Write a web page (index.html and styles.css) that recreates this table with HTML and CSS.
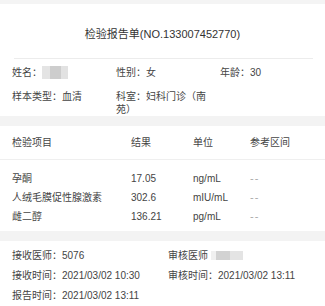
FILE: index.html
```html
<!DOCTYPE html>
<html lang="zh">
<head>
<meta charset="utf-8">
<link rel="stylesheet" href="styles.css">
</head>
<body>
<div class="topbar"></div>
<h1 class="title">检验报告单(NO.133007452770)</h1>
<div class="rule"></div>
<div class="info">
  <div>姓名：<span class="blur blur-name"></span></div>
  <div>性别：女</div>
  <div>年龄：30</div>
  <div>样本类型：血清</div>
  <div>科室：妇科门诊（南苑）</div>
  <div></div>
</div>
<div class="band"></div>
<div class="table">
  <div class="thead">
    <span>检验项目</span><span>结果</span><span>单位</span><span>参考区间</span>
  </div>
  <div class="trows">
    <div class="trow"><span>孕酮</span><span>17.05</span><span>ng/mL</span><span class="dash">--</span></div>
    <div class="trow"><span>人绒毛膜促性腺激素</span><span>302.6</span><span>mIU/mL</span><span class="dash">--</span></div>
    <div class="trow"><span>雌二醇</span><span>136.21</span><span>pg/mL</span><span class="dash">--</span></div>
  </div>
</div>
<div class="band band2"></div>
<div class="footer">
  <div>接收医师：5076</div>
  <div>审核医师 <span class="blur blur-doc"></span></div>
  <div>接收时间：2021/03/02 10:30</div>
  <div>审核时间：2021/03/02 13:11</div>
  <div>报告时间：2021/03/02 13:11</div>
</div>
</body>
</html>
```

FILE: styles.css
```css
* { box-sizing: border-box; }
html, body { margin: 0; padding: 0; background: #fff; }
body {
  width: 325px;
  font-family: "Liberation Sans", "Noto Sans CJK SC", sans-serif;
  font-size: 10px;
  line-height: 13px;
  color: #444;
}
.topbar { height: 4px; background: #f4f4f4; }
.title {
  margin: 22px 0 0;
  font-size: 11px;
  line-height: 16px;
  font-weight: normal;
  text-align: center;
  color: #333;
}
.rule {
  margin: 16px 12px 0 14px;
  height: 1px;
  background: #ececec;
}
.info {
  display: grid;
  grid-template-columns: 104px 104px 1fr;
  row-gap: 11px;
  padding: 7px 0 0 12px;
}
.blur {
  display: inline-block;
  vertical-align: middle;
  height: 13px;
  margin-top: -2px;
}
.blur-name {
  width: 26px;
  background: linear-gradient(90deg, #e4e4e4 0 30%, #cdcdcd 30% 75%, #e2e2e2 75% 100%);
}
.blur-doc {
  width: 32px;
  height: 9px;
  background: linear-gradient(90deg, #f0f0f0 0 15%, #d2d2d2 15% 60%, #e4e4e4 60% 100%);
}
.band {
  height: 10px;
  background: #f3f3f3;
}
.table { padding-top: 10px; }
.thead, .trow {
  display: grid;
  grid-template-columns: 119px 62px 57px 1fr;
  padding-left: 12px;
}
.thead {
  padding-bottom: 10px;
  border-bottom: 1px solid #efefef;
}
.trows {
  display: flex;
  flex-direction: column;
  gap: 6px;
  padding: 12px 0 8px;
}
.dash { color: #aaa; letter-spacing: 1px; font-size: 11px; }
.footer {
  display: grid;
  grid-template-columns: 156px 1fr;
  row-gap: 7px;
  padding: 8px 0 0 12px;
}
```
